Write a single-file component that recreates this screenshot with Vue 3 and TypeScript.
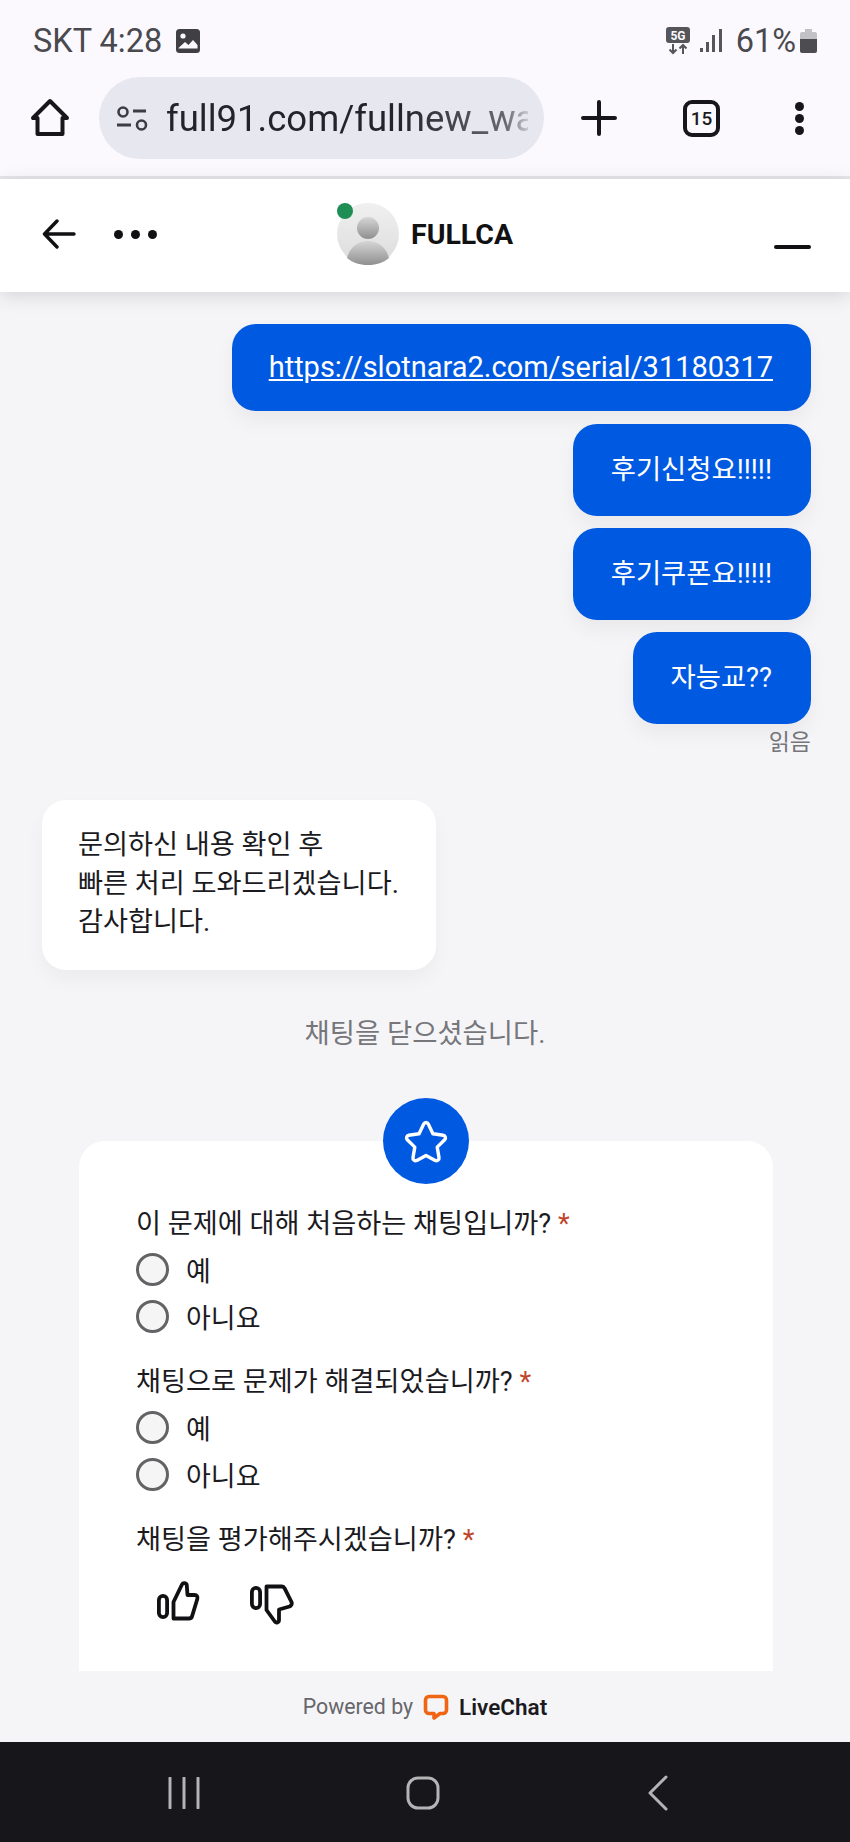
<template>
  <div class="phone">
    <div class="status-bar">
      <div class="status-left">
        <span>SKT 4:28</span>
        <svg class="pic-icon" viewBox="0 0 24 24" width="24" height="24">
          <rect x="0" y="0" width="24" height="24" rx="3.5" fill="#3f3f44" />
          <circle cx="7" cy="7" r="2.6" fill="#fbf9fe" />
          <path d="M2.5 19 9 13l3.5 3 4.500-5 4.500 5v3.500h-19z" fill="#fbf9fe" />
        </svg>
      </div>
      <div class="status-right">
        <svg width="26" height="28" viewBox="0 0 26 28">
          <rect x="1" y="0" width="24" height="16" rx="3" fill="#55555a" />
          <text x="13" y="13" text-anchor="middle" class="five-g">5G</text>
          <path d="M8 17v9M4.500 22.500 8 26l3.500-3.500M18 27v-9M14.500 21.500 18 18l3.500 3.500" fill="none" stroke="#55555a" stroke-width="2" />
        </svg>
        <svg class="signal" width="22" height="24" viewBox="0 0 22 24">
          <rect x="0" y="19" width="3" height="4" fill="#55555a" />
          <rect x="6" y="13" width="3" height="10" fill="#55555a" />
          <rect x="12" y="6" width="3" height="17" fill="#55555a" />
          <rect x="19" y="0" width="3" height="23" fill="#55555a" />
        </svg>
        <span class="battery-text">61%</span>
        <svg width="17" height="24" viewBox="0 0 17 24">
          <path d="M5 0h7v3h3a2 2 0 0 1 2 2v5H0V5a2 2 0 0 1 2-2h3z" fill="#c2c2c5" />
          <path d="M0 10h17v12a2 2 0 0 1-2 2H2a2 2 0 0 1-2-2z" fill="#4c4c51" />
        </svg>
      </div>
    </div>

    <div class="toolbar">
      <svg class="tb-icon" width="40" height="40" viewBox="0 0 40 40">
        <path d="M20 3 3 20h4.500v16h25V20H37z" fill="none" stroke="#17171b" stroke-width="4" stroke-linejoin="round" />
      </svg>
      <div class="url-pill">
        <svg width="32" height="28" viewBox="0 0 32 28" class="tune">
          <circle cx="6" cy="8" r="4.500" fill="none" stroke="#3c3d44" stroke-width="2.600" />
          <path d="M16 7h13M0 21h14" stroke="#3c3d44" stroke-width="2.800" />
          <circle cx="24.500" cy="21" r="4.500" fill="none" stroke="#3c3d44" stroke-width="2.600" />
        </svg>
        <span class="url-text">full91.com/fullnew_wa</span>
      </div>
      <svg class="plus" width="36" height="36" viewBox="0 0 36 36">
        <path d="M18 2v32M2 18h32" stroke="#17171b" stroke-width="4" stroke-linecap="round" />
      </svg>
      <div class="tabs">15</div>
      <div class="kebab"><i></i><i></i><i></i></div>
    </div>

    <header class="chat-head">
      <div class="head-left">
        <svg width="34" height="30" viewBox="0 0 34 30">
          <path d="M32 15H3M15 2 2.500 15 15 28" fill="none" stroke="#111114" stroke-width="3.400" stroke-linecap="round" stroke-linejoin="round" />
        </svg>
        <div class="dots"><i></i><i></i><i></i></div>
      </div>
      <div class="agent">
        <div class="avatar">
          <svg width="62" height="62" viewBox="0 0 62 62">
            <defs>
              <linearGradient id="bg" x1="0" y1="0" x2="0" y2="1">
                <stop offset="0" stop-color="#f0f0f0" />
                <stop offset="1" stop-color="#dcdcdc" />
              </linearGradient>
              <linearGradient id="fig" x1="0" y1="0" x2="0" y2="1">
                <stop offset="0" stop-color="#d6d6d6" />
                <stop offset="1" stop-color="#8f8f8f" />
              </linearGradient>
            </defs>
            <circle cx="31" cy="31" r="31" fill="url(#bg)" />
            <circle cx="31" cy="25" r="11" fill="url(#fig)" />
            <path d="M10 55c3-11 11-17 21-17s18 6 21 17c-5 4.500-13 7-21 7s-16-2.500-21-7z" fill="url(#fig)" />
          </svg>
          <span class="online"></span>
        </div>
        <span class="agent-name">FULLCA</span>
      </div>
      <div class="minimize"></div>
    </header>

    <main class="chat">
      <div class="msg-out">
        <a class="bubble out link">{{ link }}</a>
        <div v-for="m in outgoing" :key="m" class="bubble out">{{ m }}</div>
        <div class="read">읽음</div>
      </div>

      <div class="bubble in">
        <div v-for="l in incoming" :key="l">{{ l }}</div>
      </div>

      <div class="closed">채팅을 닫으셨습니다.</div>

      <section class="survey">
        <div class="star-badge">
          <svg width="48" height="48" viewBox="0 0 48 48">
            <path d="M24 5.500c1 0 1.800.6 2.300 1.600l4.600 9.600 10.300 1.500c2.200.3 3 3 1.500 4.500l-7.500 7.400 1.800 10.500c.4 2.200-1.900 3.900-3.800 2.800L24 38.500l-9.200 4.900c-1.900 1.100-4.200-.6-3.800-2.800l1.800-10.500-7.500-7.400c-1.500-1.500-.7-4.200 1.500-4.500l10.300-1.500 4.600-9.600c.5-1 1.300-1.600 2.300-1.600z" fill="none" stroke="#fff" stroke-width="3.400" stroke-linejoin="round" />
          </svg>
        </div>
        <div v-for="q in questions" :key="q" class="question">
          <div class="q-label">{{ q }}<span class="req">*</span></div>
          <div class="options">
            <label v-for="o in options" :key="o" class="option"><span class="radio"></span>{{ o }}</label>
          </div>
        </div>
        <div class="q-label">채팅을 평가해주시겠습니까?<span class="req">*</span></div>
        <div class="thumbs">
          <svg width="44" height="46" viewBox="0 0 44 46">
            <rect x="1.900" y="15.900" width="8.200" height="21.200" rx="4.100" fill="none" stroke="#111114" stroke-width="3.800" />
            <path d="M16.500 38.500V22L25 4.500c1-2 4.500-1.800 4.800.8l.7 9.700h7c2.500 0 3.500 2 2.800 4L35 36.500c-.5 1.300-1.500 2-3 2z" fill="none" stroke="#111114" stroke-width="3.800" stroke-linejoin="round" />
          </svg>
          <svg width="44" height="46" viewBox="0 0 44 46">
            <g transform="translate(0 3)">
              <rect x="1.900" y="4.900" width="8.200" height="20.200" rx="4.100" fill="none" stroke="#111114" stroke-width="3.800" />
              <path d="M16.500 3.500H32c1.200 0 2 .6 2.500 1.700L41.500 19c.8 1.800-.2 3.800-2 4.500L29 26.500V37c0 2.500-2.700 3.300-4.200 1.500L16.500 27z" fill="none" stroke="#111114" stroke-width="3.800" stroke-linejoin="round" />
            </g>
          </svg>
        </div>
      </section>
    </main>

    <footer class="powered">
      <span>Powered by</span>
      <svg width="26" height="26" viewBox="0 0 26 26">
        <path d="M6 2.500h14a3.500 3.500 0 0 1 3.500 3.500v10a3.500 3.500 0 0 1-3.500 3.500h-3L11 24v-4.500H6A3.500 3.500 0 0 1 2.500 16V6A3.500 3.500 0 0 1 6 2.500z" fill="none" stroke="#f06514" stroke-width="3.600" stroke-linejoin="round" />
      </svg>
      <b>LiveChat</b>
    </footer>

    <nav class="nav-bar">
      <svg width="32" height="32" viewBox="0 0 32 32">
        <path d="M2 1v30M16 1v30M30 1v30" stroke="#b4b4b6" stroke-width="3" stroke-linecap="round" />
      </svg>
      <svg width="34" height="34" viewBox="0 0 34 34">
        <rect x="2" y="2" width="30" height="30" rx="10" fill="none" stroke="#b4b4b6" stroke-width="3" />
      </svg>
      <svg width="24" height="36" viewBox="0 0 24 36">
        <path d="M20 2 4 18l16 16" fill="none" stroke="#b4b4b6" stroke-width="3" stroke-linecap="round" stroke-linejoin="round" />
      </svg>
    </nav>
  </div>
</template>

<script setup lang="ts">
const link = "https://slotnara2.com/serial/31180317";
const outgoing: string[] = ["후기신청요!!!!!", "후기쿠폰요!!!!!", "자능교??"];
const incoming: string[] = ["문의하신 내용 확인 후", "빠른 처리 도와드리겠습니다.", "감사합니다."];
const questions: string[] = ["이 문제에 대해 처음하는 채팅입니까?", "채팅으로 문제가 해결되었습니까?"];
const options: string[] = ["예", "아니요"];
</script>

<style>
body {
  margin: 0;
  background: #f5f5f8;
}
</style>

<style scoped>
.phone {
  width: 850px;
  height: 1842px;
  display: flex;
  flex-direction: column;
  overflow: hidden;
  background: #f5f5f8;
  font-family: Roboto, "Noto Sans CJK KR", sans-serif;
  color: #1b1b1f;
}

.status-bar {
  height: 60px;
  padding: 0 33px;
  background: #fbf9fe;
  display: flex;
  align-items: flex-end;
  justify-content: space-between;
  color: #49494e;
  font-size: 32.500px;
  line-height: 38px;
}
.status-left,
.status-right {
  display: flex;
  align-items: center;
  gap: 14px;
}
.status-right {
  gap: 11px;
}
.signal {
  margin-left: -2px;
}
.five-g {
  font: 700 12px Roboto, sans-serif;
  fill: #fbf9fe;
}
.battery-text {
  margin-left: 3px;
  margin-right: -7px;
}

.toolbar {
  height: 116px;
  background: #fbf9fe;
  border-bottom: 3px solid #e5e5ea;
  display: flex;
  align-items: center;
  padding-left: 30px;
  position: relative;
}
.url-pill {
  width: 445px;
  height: 82px;
  margin-left: 29px;
  border-radius: 41px;
  background: #e7e7f0;
  display: flex;
  align-items: center;
  padding: 0 16px 0 18px;
  box-sizing: border-box;
  overflow: hidden;
}
.tune {
  flex: none;
  margin-right: 17px;
}
.url-text {
  font-size: 36.500px;
  white-space: nowrap;
  overflow: hidden;
  color: #23242b;
  mask-image: linear-gradient(to right, #000 65%, rgba(0, 0, 0, 0.65) 94%, rgba(0, 0, 0, 0.15));
}
.plus {
  margin-left: 37px;
}
.tabs {
  width: 29px;
  height: 29px;
  margin-left: 66px;
  border: 4px solid #17171b;
  border-radius: 9px;
  font-size: 19px;
  font-weight: 500;
  display: flex;
  align-items: center;
  justify-content: center;
}
.kebab {
  margin-left: 75px;
  display: flex;
  flex-direction: column;
  gap: 3px;
}
.kebab i {
  width: 9px;
  height: 9px;
  border-radius: 50%;
  background: #17171b;
}

.chat-head {
  height: 113px;
  box-sizing: border-box;
  padding: 0 0 3px 42px;
  background: #fff;
  display: flex;
  align-items: center;
  position: relative;
  box-shadow: 0 4px 18px rgba(0, 0, 0, 0.13);
  z-index: 2;
}
.head-left {
  display: flex;
  align-items: center;
  gap: 38px;
}
.dots {
  display: flex;
  gap: 8px;
}
.dots i {
  width: 9px;
  height: 9px;
  border-radius: 50%;
  background: #111114;
}
.agent {
  display: flex;
  align-items: center;
  gap: 12px;
  margin-left: 180px;
}
.avatar {
  width: 62px;
  height: 62px;
  position: relative;
}
.online {
  position: absolute;
  left: 0;
  top: 0;
  width: 16px;
  height: 16px;
  border-radius: 50%;
  background: #1e8e55;
}
.agent-name {
  font-size: 28.500px;
  font-weight: 700;
  color: #111114;
}
.minimize {
  position: absolute;
  right: 39px;
  top: 66px;
  width: 37px;
  height: 4px;
  border-radius: 2px;
  background: #111114;
}

.chat {
  flex: 1;
  padding: 32px 39px 0 42px;
  display: flex;
  flex-direction: column;
  min-height: 0;
}
.msg-out {
  display: flex;
  flex-direction: column;
  align-items: flex-end;
  gap: 12px;
}
.bubble {
  font-size: 27.400px;
  line-height: 40px;
  border-radius: 24px;
  padding: 26px 39px 26px 38px;
}
.bubble.out {
  background: #0059e1;
  color: #fff;
  box-shadow: 0 10px 20px rgba(0, 0, 0, 0.05);
}
.bubble.link {
  font-size: 29px;
  text-decoration: underline;
  padding: 23px 38px 24px 37px;
  margin-bottom: 1px;
}
.read {
  margin-top: -8px;
  font-size: 23px;
  line-height: 30px;
  color: #75757a;
}
.bubble.in {
  margin-top: 42px;
  width: 394px;
  height: 170px;
  box-sizing: border-box;
  padding: 26px 0 0 36px;
  font-size: 27.200px;
  line-height: 38.500px;
  white-space: nowrap;
  background: #fff;
  box-shadow: 0 10px 20px rgba(0, 0, 0, 0.04);
}
.closed {
  margin-top: 44px;
  text-align: center;
  font-size: 27.400px;
  line-height: 40px;
  color: #76767b;
  margin-left: -3px;
}
.survey {
  margin: 87px 0 0 37px;
  width: 694px;
  flex: 1;
  box-sizing: border-box;
  padding: 63px 57px 0;
  background: #fff;
  border-radius: 26px 26px 0 0;
  position: relative;
}
.star-badge {
  position: absolute;
  left: 304px;
  top: -43px;
  width: 86px;
  height: 86px;
  border-radius: 50%;
  background: #0059e1;
  display: flex;
  align-items: center;
  justify-content: center;
}
.question {
  margin-bottom: 22.500px;
}
.q-label {
  font-size: 27.200px;
  line-height: 40px;
  color: #1b1b1f;
}
.req {
  color: #c0452c;
  margin-left: 7px;
}
.options {
  margin-top: 1.500px;
}
.option {
  height: 47px;
  display: flex;
  align-items: center;
  gap: 17px;
  font-size: 27px;
}
.radio {
  width: 27px;
  height: 27px;
  border: 3px solid #636366;
  border-radius: 50%;
  background: #f5f5f5;
}
.thumbs {
  display: flex;
  gap: 49px;
  margin: 20px 0 0 21px;
}

.powered {
  height: 71px;
  display: flex;
  align-items: center;
  justify-content: center;
  gap: 10px;
  font-size: 21.300px;
  color: #66666b;
}
.powered b {
  color: #1b1b1f;
  font-size: 22.500px;
  font-weight: 600;
}

.nav-bar {
  height: 100px;
  box-sizing: border-box;
  padding: 2px 0 0 168px;
  background: #17161a;
  display: flex;
  align-items: center;
  gap: 206px;
}
</style>
